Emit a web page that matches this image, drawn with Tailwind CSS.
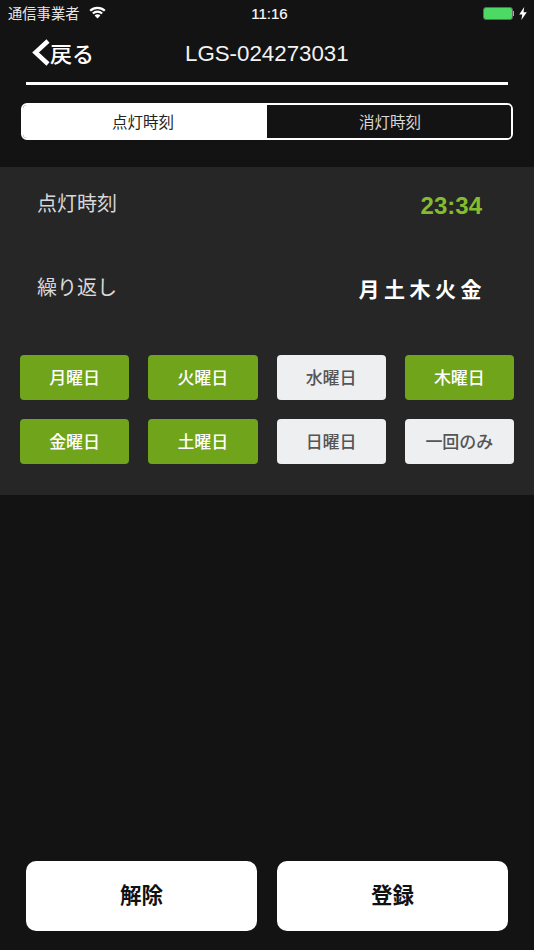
<!DOCTYPE html>
<html lang="ja">
<head>
  <meta charset="UTF-8">
  <script src="https://cdn.jsdelivr.net/npm/@tailwindcss/browser@4"></script>
</head>
<body class="bg-[#131313] font-['Noto_Sans_CJK_JP','Noto_Sans',sans-serif]">
  <div class="w-[534px] h-[950px] flex flex-col overflow-hidden">
    <!-- status bar -->
    <div class="h-[27px] pl-2 pr-[7px] flex items-center text-[#e6e6e6]">
      <div class="w-[192px] flex items-center gap-[9px]">
        <span class="text-[14.3px] leading-none">通信事業者</span>
        <svg class="mb-[2px] ml-[1px]" width="17" height="13" viewBox="0 0 17 12" fill="#fff"><path d="M8.5 12 5.6 8.9a4 4 0 0 1 5.8 0z"/><path d="M4.6 7.8 3.1 6.2a7.7 7.7 0 0 1 10.8 0l-1.5 1.6a5.6 5.6 0 0 0-7.8 0z"/><path d="M2 5.1.4 3.4a11.7 11.7 0 0 1 16.2 0L15 5.1a9.4 9.4 0 0 0-13 0z"/></svg>
      </div>
      <span class="w-[139px] text-center text-[15px] leading-none text-white font-['Liberation_Sans',sans-serif] [-webkit-text-stroke:0.15px_#fff]">11:16</span>
      <div class="ml-auto flex items-center gap-[5px]">
        <div class="flex items-center">
          <div class="w-[30px] h-[13px] rounded-[3px] bg-[#4cd964] border border-[#666]"></div>
          <div class="w-[1px] h-[5px] bg-[#aaa]"></div>
        </div>
        <svg width="8" height="13" viewBox="0 0 7 12" fill="#fff"><path d="M4.6 0 0 7h2.8L2 12l5-7.2H4z"/></svg>
      </div>
    </div>

    <!-- header -->
    <div class="mx-[26px] h-[58px] border-b-[3px] border-white flex items-center relative">
      <div class="flex items-center pl-[6px] pb-[5px]">
        <svg width="18" height="27" viewBox="0 0 18 27" fill="none" stroke="#fff" stroke-width="4.5"><path d="M16 2 3.5 13.5 16 25"/></svg>
        <span class="text-[22px] leading-none font-medium text-white">戻る</span>
      </div>
      <span class="absolute left-[159px] top-[12px] text-[22.3px] leading-[30px] text-[#f2f2f2] font-['Liberation_Sans',sans-serif]">LGS-024273031</span>
    </div>

    <!-- tabs -->
    <div class="mt-[18px] mx-[21px] w-[492px] h-[37px] flex rounded-[6px] border-2 border-white overflow-hidden">
      <div class="w-1/2 pr-[4px] bg-white flex items-center justify-center text-[15.5px] text-[#222]">点灯時刻</div>
      <div class="w-1/2 pl-[2px] bg-[#131313] flex items-center justify-center text-[15.5px] text-[#d8d8d8]">消灯時刻</div>
    </div>

    <!-- settings panel -->
    <div class="mt-[27px] h-[328px] bg-[#262626] flex flex-col">
      <div class="h-[84px] pl-[37px] pr-[52px] pt-[21px] flex justify-between items-start">
        <span class="text-[20px] leading-[30px] text-[#d8d8d8]">点灯時刻</span>
        <span class="text-[24px] leading-[34px] mt-[1px] font-bold text-[#83bd2e] font-['Liberation_Sans',sans-serif]">23:34</span>
      </div>
      <div class="h-[104px] pl-[37px] pr-[52px] pt-[21px] flex justify-between items-start">
        <span class="text-[20px] leading-[30px] text-[#d8d8d8]">繰り返し</span>
        <span class="text-[21px] leading-[30px] mt-[1px] font-bold text-white tracking-[4.5px] mr-[-4px]">月土木火金</span>
      </div>
      <div class="px-[20px] grid grid-cols-4 gap-x-[19px] gap-y-[19px]">
        <button class="h-[45px] pb-[2px] rounded-[4px] bg-[#6fa41b] text-white text-[17px] font-medium">月曜日</button>
        <button class="h-[45px] pb-[2px] rounded-[4px] bg-[#6fa41b] text-white text-[17px] font-medium">火曜日</button>
        <button class="h-[45px] pb-[2px] rounded-[4px] bg-[#eeeff1] text-[#555] text-[17px] font-medium">水曜日</button>
        <button class="h-[45px] pb-[2px] rounded-[4px] bg-[#6fa41b] text-white text-[17px] font-medium">木曜日</button>
        <button class="h-[45px] pb-[2px] rounded-[4px] bg-[#6fa41b] text-white text-[17px] font-medium">金曜日</button>
        <button class="h-[45px] pb-[2px] rounded-[4px] bg-[#6fa41b] text-white text-[17px] font-medium">土曜日</button>
        <button class="h-[45px] pb-[2px] rounded-[4px] bg-[#eeeff1] text-[#555] text-[17px] font-medium">日曜日</button>
        <button class="h-[45px] pb-[2px] rounded-[4px] bg-[#eeeff1] text-[#555] text-[17px] font-medium">一回のみ</button>
      </div>
    </div>

    <!-- bottom actions -->
    <div class="mt-auto mb-[19px] px-[26px] flex justify-between">
      <button class="w-[231px] h-[70px] pb-[3px] rounded-[10px] bg-white text-[#111] text-[21.5px] font-bold">解除</button>
      <button class="w-[231px] h-[70px] pb-[3px] rounded-[10px] bg-white text-[#111] text-[21.5px] font-bold">登録</button>
    </div>
  </div>
</body>
</html>
